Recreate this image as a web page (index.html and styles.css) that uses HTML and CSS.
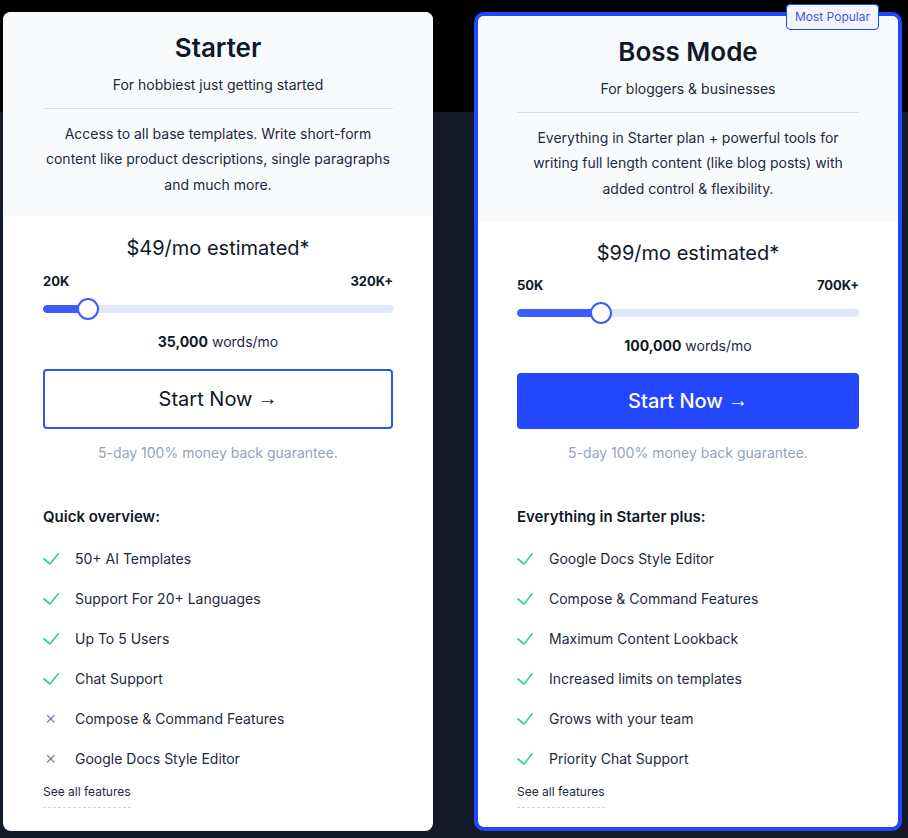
FILE: index.html
```html
<!DOCTYPE html>
<html lang="en">
<head>
<meta charset="utf-8">
<title>Pricing</title>
<link rel="stylesheet" href="styles.css">
</head>
<body>
<div class="plans">
  <section class="card">
    <div class="card-top">
      <h2 class="plan-title">Starter</h2>
      <p class="plan-sub">For hobbiest just getting started</p>
      <hr class="divider">
      <p class="plan-desc">Access to all base templates. Write short-form content like product descriptions, single paragraphs and much more.</p>
    </div>
    <div class="card-body">
      <div class="price">$49/mo estimated*</div>
      <div class="range-labels"><span>20K</span><span>320K+</span></div>
      <div class="slider">
        <div class="track"><div class="fill" style="width:12.9%"></div></div>
        <div class="thumb" style="left:12.9%"></div>
      </div>
      <div class="words"><b>35,000</b> words/mo</div>
      <a class="btn btn-outline" href="#">Start Now <span class="arrow">→</span></a>
      <p class="guarantee">5-day 100% money back guarantee.</p>
      <h3 class="list-title">Quick overview:</h3>
      <ul class="features">
        <li><span class="ic"><svg class="check" width="16" height="12" viewBox="0 0 16 12"><polyline points="1,6 7,11 15,1"/></svg></span>50+ AI Templates</li>
        <li><span class="ic"><svg class="check" width="16" height="12" viewBox="0 0 16 12"><polyline points="1,6 7,11 15,1"/></svg></span>Support For 20+ Languages</li>
        <li><span class="ic"><svg class="check" width="16" height="12" viewBox="0 0 16 12"><polyline points="1,6 7,11 15,1"/></svg></span>Up To 5 Users</li>
        <li><span class="ic"><svg class="check" width="16" height="12" viewBox="0 0 16 12"><polyline points="1,6 7,11 15,1"/></svg></span>Chat Support</li>
        <li><span class="ic"><svg class="cross" width="16" height="12" viewBox="0 0 16 12"><path d="M4.5 2.5l6.5 6.5M11 2.5l-6.5 6.5"/></svg></span>Compose &amp; Command Features</li>
        <li><span class="ic"><svg class="cross" width="16" height="12" viewBox="0 0 16 12"><path d="M4.5 2.5l6.5 6.5M11 2.5l-6.5 6.5"/></svg></span>Google Docs Style Editor</li>
      </ul>
      <a class="see-all" href="#">See all features</a>
    </div>
  </section>

  <section class="card card-featured">
    <span class="badge">Most Popular</span>
    <div class="card-top">
      <h2 class="plan-title">Boss Mode</h2>
      <p class="plan-sub">For bloggers &amp; businesses</p>
      <hr class="divider">
      <p class="plan-desc">Everything in Starter plan + powerful tools for writing full length content (like blog posts) with added control &amp; flexibility.</p>
    </div>
    <div class="card-body">
      <div class="price">$99/mo estimated*</div>
      <div class="range-labels"><span>50K</span><span>700K+</span></div>
      <div class="slider">
        <div class="track"><div class="fill" style="width:24.6%"></div></div>
        <div class="thumb" style="left:24.6%"></div>
      </div>
      <div class="words"><b>100,000</b> words/mo</div>
      <a class="btn btn-solid" href="#">Start Now <span class="arrow">→</span></a>
      <p class="guarantee">5-day 100% money back guarantee.</p>
      <h3 class="list-title">Everything in Starter plus:</h3>
      <ul class="features">
        <li><span class="ic"><svg class="check" width="16" height="12" viewBox="0 0 16 12"><polyline points="1,6 7,11 15,1"/></svg></span>Google Docs Style Editor</li>
        <li><span class="ic"><svg class="check" width="16" height="12" viewBox="0 0 16 12"><polyline points="1,6 7,11 15,1"/></svg></span>Compose &amp; Command Features</li>
        <li><span class="ic"><svg class="check" width="16" height="12" viewBox="0 0 16 12"><polyline points="1,6 7,11 15,1"/></svg></span>Maximum Content Lookback</li>
        <li><span class="ic"><svg class="check" width="16" height="12" viewBox="0 0 16 12"><polyline points="1,6 7,11 15,1"/></svg></span>Increased limits on templates</li>
        <li><span class="ic"><svg class="check" width="16" height="12" viewBox="0 0 16 12"><polyline points="1,6 7,11 15,1"/></svg></span>Grows with your team</li>
        <li><span class="ic"><svg class="check" width="16" height="12" viewBox="0 0 16 12"><polyline points="1,6 7,11 15,1"/></svg></span>Priority Chat Support</li>
      </ul>
      <a class="see-all" href="#">See all features</a>
    </div>
  </section>
</div>
</body>
</html>
```

FILE: styles.css
```css
* { box-sizing: border-box; }

html, body {
  margin: 0;
  padding: 0;
}

body {
  min-height: 838px;
  font-family: Inter, "Noto Sans", sans-serif;
  color: #1e293b;
  background: linear-gradient(to bottom, #000 0, #000 112px, #131a27 112px, #131a27 100%);
}

.plans {
  display: flex;
  align-items: stretch;
  gap: 41px;
  padding: 12px 6px 7px 3px;
  height: 838px;
}

.card {
  position: relative;
  width: 430px;
  background: #fff;
  border-radius: 8px;
  display: flex;
  flex-direction: column;
}

.card-featured {
  width: 428px;
  border: 4px solid #2346ff;
  border-radius: 10px;
}

.card-top {
  background: #f8fafc;
  border-radius: 8px 8px 0 0;
  padding: 21px 40px 19px;
  text-align: center;
}

.card-featured .card-top {
  padding-left: 39px;
  padding-right: 39px;
  padding-bottom: 20px;
  border-radius: 6px 6px 0 0;
}

.plan-title {
  margin: 0;
  font-size: 26px;
  line-height: 30px;
  font-weight: 600;
  color: #111827;
}

.plan-sub {
  margin: 12px 0 0;
  font-size: 14px;
  line-height: 20px;
  color: #1e293b;
}

.divider {
  margin: 13px 0 0;
  border: 0;
  border-top: 1px solid #d5dee9;
  height: 0;
}

.plan-desc {
  margin: 12px 0 0;
  font-size: 14px;
  line-height: 25.3px;
  color: #1e293b;
}

.card-body {
  flex: 1;
  padding: 18px 40px 0;
  display: flex;
  flex-direction: column;
}

.card-featured .card-body {
  padding-left: 39px;
  padding-right: 39px;
}

.price {
  text-align: center;
  font-size: 20px;
  line-height: 28px;
  color: #111827;
}

.range-labels {
  margin-top: 10px;
  display: flex;
  justify-content: space-between;
  font-size: 13px;
  line-height: 18px;
  font-weight: 700;
  color: #111827;
}

.card-featured .range-labels {
  margin-top: 9px;
}

.slider {
  position: relative;
  margin-top: 8px;
  height: 22px;
  display: flex;
  align-items: center;
}

.track {
  width: 100%;
  height: 8px;
  border-radius: 4px;
  background: #e0e7f8;
  overflow: hidden;
}

.fill {
  height: 100%;
  background: #3c5cfb;
  border-radius: 4px;
}

.thumb {
  position: absolute;
  top: 0;
  width: 22px;
  height: 22px;
  margin-left: -11px;
  border-radius: 50%;
  background: #fff;
  border: 2px solid #3c5cfb;
}

.words {
  margin-top: 12px;
  text-align: center;
  font-size: 14px;
  line-height: 20px;
  color: #1e293b;
}

.words b {
  font-weight: 700;
  color: #111827;
}

.btn {
  display: flex;
  align-items: center;
  justify-content: center;
  margin-top: 17px;
  border-radius: 4px;
  font-size: 20px;
  text-decoration: none;
}

.arrow {
  font-family: "Liberation Sans", Arial, sans-serif;
  margin-left: 5px;
}

.btn-outline {
  height: 60px;
  border: 2px solid #2a55f0;
  color: #111827;
  font-weight: 400;
}

.btn-solid {
  height: 56px;
  background: #2346ff;
  color: #fff;
  font-weight: 500;
}

.guarantee {
  margin: 14px 0 0;
  text-align: center;
  font-size: 14px;
  line-height: 20px;
  color: #94a3b8;
}

.list-title {
  margin: 43px 0 0;
  font-size: 15px;
  line-height: 22px;
  font-weight: 600;
  color: #111827;
}

.features {
  list-style: none;
  margin: 11px 0 0;
  padding: 0;
}

.features li {
  height: 40px;
  display: flex;
  align-items: center;
  font-size: 14px;
  color: #1e293b;
}

.ic {
  width: 32px;
  flex: none;
  display: flex;
  align-items: center;
}

.check polyline {
  fill: none;
  stroke: #34d399;
  stroke-width: 1.8;
  stroke-linecap: round;
  stroke-linejoin: round;
}

.cross path {
  fill: none;
  stroke: #7584a0;
  stroke-width: 1.2;
  stroke-linecap: round;
}

.see-all {
  align-self: flex-start;
  margin-top: 5px;
  padding-bottom: 7px;
  font-size: 12px;
  line-height: 16px;
  color: #1e293b;
  text-decoration: none;
  border-bottom: 1px dashed #cbd5e1;
}

.badge {
  position: absolute;
  top: -12px;
  right: 19px;
  padding: 4px 8px;
  font-size: 12px;
  line-height: 16px;
  color: #4254e6;
  background: #f4f6ff;
  border: 1px solid #2346ff;
  border-radius: 4px;
}
```
